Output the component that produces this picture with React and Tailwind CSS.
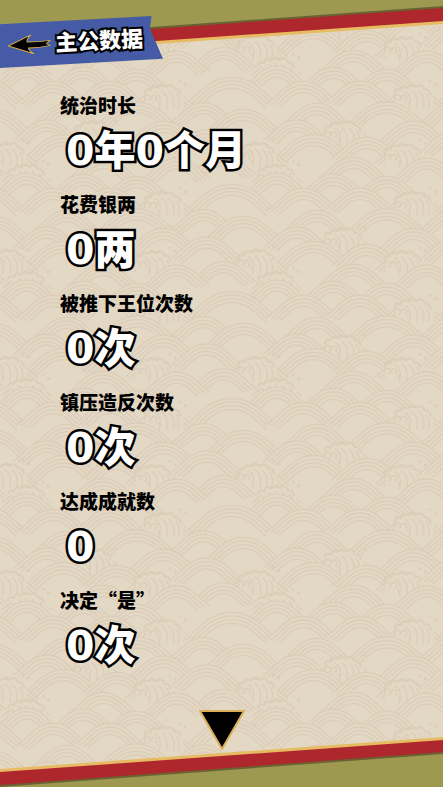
import React from "react";

const stats = [
    { label: "统治时长", value: "0年0个月" },
    { label: "花费银两", value: "0两" },
    { label: "被推下王位次数", value: "0次" },
    { label: "镇压造反次数", value: "0次" },
    { label: "达成成就数", value: "0" },
    { label: "决定“是”", value: "0次" },
];

// crest x, crest y, half width, kind - drawn from back to front inside a 750 x 321 tile
const waves = [
    [230, 0, 90],
    [400, 4, 100],
    [560, 10, 100],
    [95, 34, 160],
    [310, 46, 110],
    [480, 46, 105],
    [640, 62, 90, "foam"],
    [10, 110, 100],
    [350, 112, 100],
    [560, 108, 140],
    [130, 130, 125],
    [290, 162, 100],
    [430, 172, 85, "foam"],
    [640, 166, 110],
    [20, 192, 110],
    [340, 206, 130],
    [500, 214, 105],
    [170, 236, 95, "foam"],
    [610, 240, 85, "foam"],
    [70, 266, 100],
    [460, 274, 105],
    [680, 276, 100],
    [230, 302, 75, "foam"],
];

const hump = (w, h) =>
    `M${-w} ${h} C${-w * 0.7} ${h * 0.75} ${-w * 0.5} 0 0 0 S${w * 0.7} ${h * 0.75} ${w} ${h}`;

const Wave = ({ x, y, w, kind }) => (
    <g transform={`translate(${x} ${y})`}>
        <path d={`${hump(w, w * 0.62)} V110 H${-w} Z`} fill="#e3d8c4" stroke="none" />
        {[0, 1, 2, 3].map((i) => (
            <path key={i} d={hump(w - i * 12, (w - i * 12) * 0.6)} transform={`translate(0 ${i * 11})`} />
        ))}
        {kind === "foam" && (
            <g>
                <path
                    d="M-52 22 V90 H60 V20 Q40 -6 10 2 Q-30 -4 -52 22 Z"
                    fill="#e3d8c4"
                    stroke="none"
                />
                <path d="M-56 20 q2 -18 18 -10 q4 -18 22 -8 q10 -16 24 -2 q18 -12 26 8 q16 -2 18 18" strokeWidth="6" />
                <path d="M-26 14 q22 10 16 42 M-6 12 q24 14 16 54 M16 14 q22 16 14 52 M38 20 q16 18 6 46" />
                <path d="M-56 36 a9 9 0 1 1 12 6 M-36 34 a8 8 0 1 1 10 8 M-18 46 q10 6 6 22" />
                <circle cx="66" cy="-6" r="3" />
                <circle cx="50" cy="-16" r="2" />
            </g>
        )}
    </g>
);

const WaveBackground = () => (
    <svg className="absolute inset-0 h-full w-full" aria-hidden="true">
        <defs>
            <pattern id="waves" x="200" y="66" width="250" height="107" patternUnits="userSpaceOnUse">
                <g transform="scale(0.3333)" fill="none" stroke="#dccdb9" strokeWidth="4">
                    {[-321, 0].map((dy) =>
                        waves.map(([x, y, w, kind]) =>
                            [-750, 0, 750].map((dx) => (
                                <Wave key={`${dx} ${dy} ${x} ${y}`} x={x + dx} y={y + dy} w={w} kind={kind} />
                            ))
                        )
                    )}
                </g>
            </pattern>
        </defs>
        <rect width="100%" height="100%" fill="#e3d8c4" />
        <rect width="100%" height="100%" fill="url(#waves)" />
    </svg>
);

const TopBand = () => (
    <svg className="block h-14 w-full" viewBox="0 0 443 56" preserveAspectRatio="none" aria-hidden="true">
        <path d="M0 0 H443 V24 L0 55 Z" fill="#e7bb61" />
        <path d="M0 0 H443 V21 L0 52 Z" fill="#ad272d" />
        <path d="M0 0 H443 V8 L0 40 Z" fill="#6b6233" />
        <path d="M0 0 H443 V6 L0 38 Z" fill="#9d9950" />
    </svg>
);

const BottomBand = () => (
    <svg className="block h-[50px] w-full" viewBox="0 0 443 50" preserveAspectRatio="none" aria-hidden="true">
        <path d="M0 32 L443 0 V50 H0 Z" fill="#e7bb61" />
        <path d="M0 35 L443 3 V50 H0 Z" fill="#ad272d" />
        <path d="M0 48 L443 15 V50 H0 Z" fill="#6b6233" />
        <path d="M0 50 L443 17 V50 H0 Z" fill="#9d9950" />
    </svg>
);

const Ribbon = () => (
    <div className="absolute top-4 left-0 h-13 w-[163px] bg-[#455ba6] [clip-path:polygon(0_16%,93%_0,92%_24%,100%_82%,0_100%)]">
        <div className="flex h-12 origin-left -rotate-3 items-center gap-1 pl-[7px]">
            <a href="#back" aria-label="返回" className="mt-3 block">
                <svg className="h-5 w-11" viewBox="0 0 44 20">
                    <path
                        d="M1 10.500 L24 0.500 Q19 5 20 7.500 Q32 8 43 7 L39 10 L43 12 Q32 14 21 13.500 Q21 16 26 19.500 Z"
                        fill="#000"
                        stroke="#d7a948"
                        strokeWidth="1"
                        strokeLinejoin="round"
                    />
                </svg>
            </a>
            <h1 className="pt-2 text-[22px] leading-8 font-black whitespace-nowrap text-white [-webkit-text-stroke:4px_#000] [paint-order:stroke_fill]">
                主公数据
            </h1>
        </div>
    </div>
);

const App = () => {
    return (
        <div className="relative flex min-h-screen flex-col overflow-hidden bg-[#e3d8c4] font-['Noto_Sans_CJK_SC',sans-serif] text-black">
            <WaveBackground />
            <header className="relative">
                <TopBand />
                <Ribbon />
            </header>
            <main className="relative flex flex-1 flex-col pt-[35px]">
                <dl className="pl-[60px]">
                    {stats.map((item) => (
                        <div key={item.label} className="pb-[9px]">
                            <dt className="text-[19px] leading-7 font-black">{item.label}</dt>
                            <dd className="pt-[2px] pl-[6px] font-['DejaVu_Sans','Noto_Sans_CJK_SC',sans-serif] text-[41px] leading-[60px] font-black whitespace-nowrap text-white [-webkit-text-stroke:5px_#000] [paint-order:stroke_fill]">
                                {item.value}
                            </dd>
                        </div>
                    ))}
                </dl>
            </main>
            <footer className="relative">
                <button type="button" aria-label="下一页" className="absolute bottom-9 left-1/2 block -translate-x-1/2">
                    <svg className="h-[42px] w-12" viewBox="0 0 48 42">
                        <path d="M2 2 H46 L24 40 Z" fill="#000" stroke="#dcae58" strokeWidth="2" strokeLinejoin="round" />
                    </svg>
                </button>
                <BottomBand />
            </footer>
        </div>
    );
};

export default App;
